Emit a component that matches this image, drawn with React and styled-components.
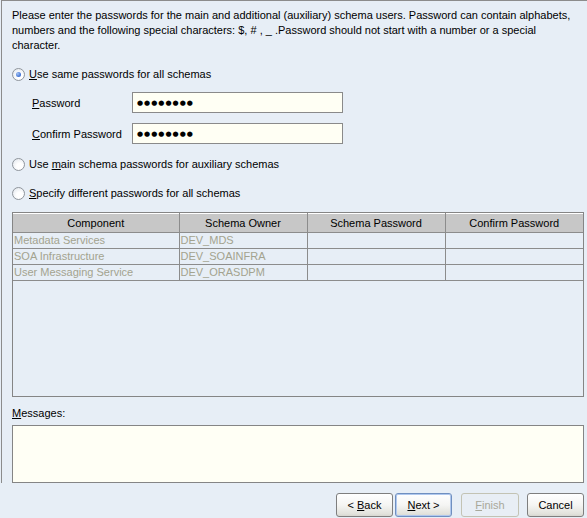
import React from "react";
import styled, { createGlobalStyle } from "styled-components";

const GlobalStyle = createGlobalStyle`
  html, body {
    margin: 0;
    padding: 0;
    background: #e7eef6;
  }
  body {
    font-family: "Liberation Sans", Arial, sans-serif;
    font-size: 11px;
    color: #000;
  }
`;

const Page = styled.div`
  width: 587px;
  height: 518px;
  overflow: hidden;
`;

const Panel = styled.div`
  margin-left: 1px;
  height: 483px;
  box-sizing: border-box;
  border-top: 1px solid #8c8c8c;
  border-left: 1px solid #8c8c8c;
  padding: 7px 3px 0 10px;
  display: flex;
  flex-direction: column;
`;

const Intro = styled.div`
  line-height: 15px;
  span {
    display: block;
    white-space: nowrap;
  }
`;

const RadioRow = styled.label`
  display: flex;
  align-items: center;
  height: 14px;
  margin-top: ${(p) => p.$top}px;
  gap: 4px;
`;

const RadioDot = styled.span`
  width: 13px;
  height: 13px;
  box-sizing: border-box;
  border-radius: 50%;
  border: 1px solid #8f959c;
  background: radial-gradient(circle at 60% 65%, #ffffff 30%, #dde3ea 100%);
  display: flex;
  align-items: center;
  justify-content: center;
  &::after {
    content: "";
    display: ${(p) => (p.$checked ? "block" : "none")};
    width: 5px;
    height: 5px;
    border-radius: 50%;
    background: radial-gradient(circle at 35% 35%, #a6c4f2 0%, #3b6fd4 70%, #2b55b0 100%);
  }
`;

const FieldRow = styled.div`
  display: flex;
  align-items: center;
  margin-top: ${(p) => p.$top}px;
  padding-left: 20px;
`;

const FieldLabel = styled.span`
  width: 100px;
`;

const PasswordBox = styled.div`
  width: 211px;
  height: 21px;
  box-sizing: border-box;
  border: 1px solid #8a8a8a;
  background: #fffff4;
  display: flex;
  align-items: center;
  padding-left: 4px;
  font-family: "DejaVu Sans", sans-serif;
  font-size: 7px;
  letter-spacing: 1px;
`;

const TableBox = styled.div`
  margin-top: 12px;
  width: 572px;
  height: 185px;
  box-sizing: border-box;
  border: 1px solid #858585;
`;

const Grid = styled.table`
  width: 100%;
  border-collapse: collapse;
  table-layout: fixed;
`;

const Th = styled.th`
  height: 18px;
  padding: 0;
  font-weight: normal;
  background: #c7c7c7;
  border-top: 1px solid #ffffff;
  border-left: 1px solid #ffffff;
  border-right: 1px solid #8c8c8c;
  border-bottom: 1px solid #8c8c8c;
  text-align: center;
  &:first-child {
    border-left: none;
  }
  &:last-child {
    border-right: none;
  }
`;

const Td = styled.td`
  height: 15px;
  padding: 0 1px;
  color: #a3a38f;
  border-right: 1px solid #8c8c8c;
  border-bottom: 1px solid #8c8c8c;
  white-space: nowrap;
  overflow: hidden;
  line-height: 15px;
  &:last-child {
    border-right: none;
  }
`;

const MessagesLabel = styled.div`
  margin-top: 9px;
  line-height: 15px;
`;

const MessagesBox = styled.div`
  margin-top: 4px;
  width: 572px;
  height: 58px;
  box-sizing: border-box;
  border: 1px solid #858585;
  background: #fffff5;
`;

const ButtonBar = styled.div`
  display: flex;
  justify-content: flex-end;
  padding: 10px 3px 0 0;
`;

const Button = styled.button`
  width: ${(p) => p.$w || 57}px;
  height: 24px;
  margin-left: ${(p) => p.$gap || 0}px;
  padding: 0;
  box-sizing: border-box;
  border-radius: 3px;
  font-family: "Liberation Sans", Arial, sans-serif;
  font-size: 11px;
  color: ${(p) => (p.disabled ? "#a8a89a" : "#000")};
  border: 1px solid ${(p) => (p.disabled ? "#c3c3b4" : p.$focus ? "#6f8fc0" : "#7e7e7e")};
  background: ${(p) =>
    p.disabled
      ? "#e8eef5"
      : "linear-gradient(#ffffff 0%, #f5f5f3 50%, #e2e2dc 90%, #d6d6d0 100%)"};
  box-shadow: ${(p) => (p.$focus ? "inset 0 0 0 1px #b0c8ee" : "none")};
`;

const Key = styled.span`
  text-decoration: underline;
`;

const rows = [
  ["Metadata Services", "DEV_MDS"],
  ["SOA Infrastructure", "DEV_SOAINFRA"],
  ["User Messaging Service", "DEV_ORASDPM"],
];

export default function App() {
  return (
    <Page>
      <GlobalStyle />
      <Panel>
        <Intro>
          <span>
            Please enter the passwords for the main and additional (auxiliary) schema users. Password can contain alphabets,
          </span>
          <span>
            numbers and the following special characters: $, # , _ .Password should not start with a number or a special
          </span>
          <span>character.</span>
        </Intro>

        <RadioRow $top={14}>
          <RadioDot $checked />
          <span>
            <Key>U</Key>se same passwords for all schemas
          </span>
        </RadioRow>

        <FieldRow $top={11}>
          <FieldLabel>
            <Key>P</Key>assword
          </FieldLabel>
          <PasswordBox>●●●●●●●●</PasswordBox>
        </FieldRow>
        <FieldRow $top={10}>
          <FieldLabel>
            <Key>C</Key>onfirm Password
          </FieldLabel>
          <PasswordBox>●●●●●●●●</PasswordBox>
        </FieldRow>

        <RadioRow $top={13}>
          <RadioDot />
          <span>
            Use <Key>m</Key>ain schema passwords for auxiliary schemas
          </span>
        </RadioRow>
        <RadioRow $top={15}>
          <RadioDot />
          <span>
            <Key>S</Key>pecify different passwords for all schemas
          </span>
        </RadioRow>

        <TableBox>
          <Grid>
            <colgroup>
              <col style={{ width: 166 }} />
              <col style={{ width: 128 }} />
              <col style={{ width: 138 }} />
              <col />
            </colgroup>
            <thead>
              <tr>
                <Th>Component</Th>
                <Th>Schema Owner</Th>
                <Th>Schema Password</Th>
                <Th>Confirm Password</Th>
              </tr>
            </thead>
            <tbody>
              {rows.map(([name, owner]) => (
                <tr key={name}>
                  <Td>{name}</Td>
                  <Td>{owner}</Td>
                  <Td />
                  <Td />
                </tr>
              ))}
            </tbody>
          </Grid>
        </TableBox>

        <MessagesLabel>
          <Key>M</Key>essages:
        </MessagesLabel>
        <MessagesBox />
      </Panel>

      <ButtonBar>
        <Button>
          &lt; <Key>B</Key>ack
        </Button>
        <Button $gap={2} $focus>
          <Key>N</Key>ext &gt;
        </Button>
        <Button $gap={9} $w={58} disabled>
          <Key>F</Key>inish
        </Button>
        <Button $gap={8}>Cancel</Button>
      </ButtonBar>
    </Page>
  );
}
